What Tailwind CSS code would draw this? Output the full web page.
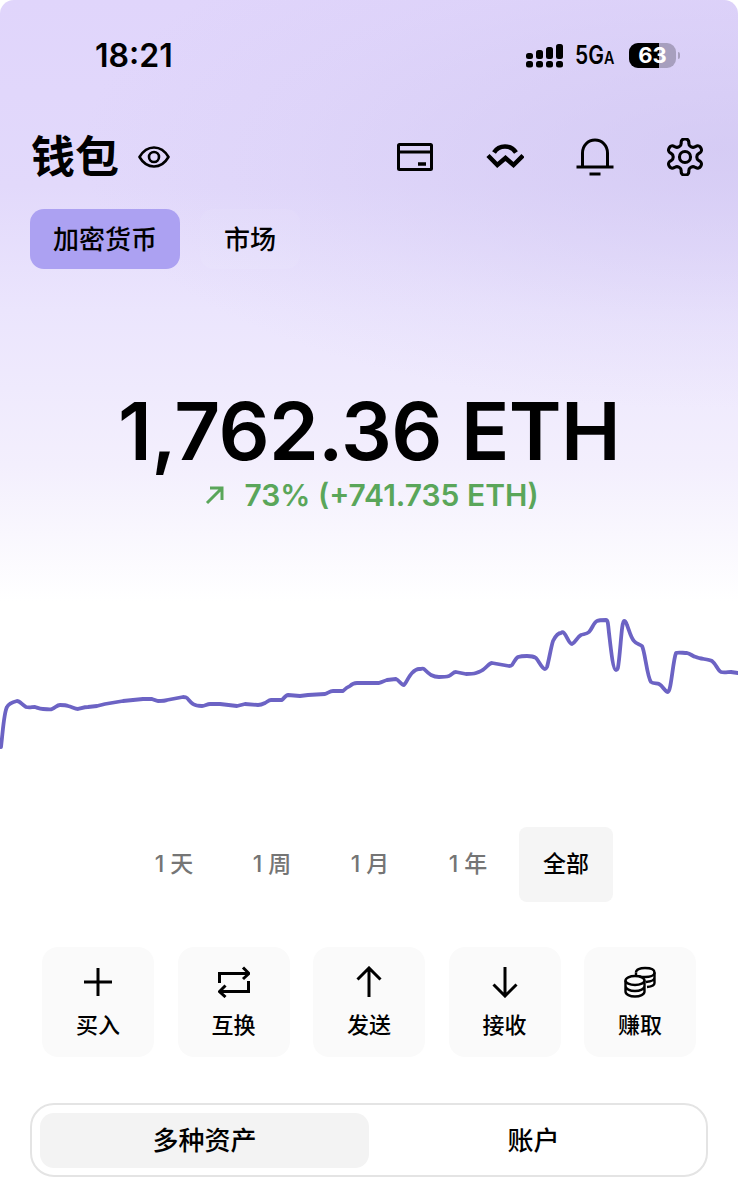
<!doctype html>
<html lang="zh"><head><meta charset="utf-8"><script src="https://cdn.jsdelivr.net/npm/@tailwindcss/browser@4"></script></head>
<body class="bg-white">
<div class="w-[738px] h-[1200px] overflow-hidden bg-white text-black font-['Inter','Noto_Sans_CJK_SC',sans-serif]">
<div class="h-[620px] rounded-t-[14px] bg-[radial-gradient(ellipse_640px_260px_at_720px_150px,#cfc5f1a6,#cfc5f166_35%,#cfc5f126_68%,#cfc5f100),linear-gradient(180deg,#e0d5fb_0%,#e2d9fb_30%,#ebe5fd_50%,#f3effd_75%,#ffffff_97%)]">
  <!-- status bar -->
  <div class="h-[110px] flex items-center justify-between pl-[95px] pr-[58px]">
    <span class="text-[32px] leading-none font-semibold relative top-[1px]">18:21</span>
    <div class="flex items-center">
      <svg width="37" height="25" viewBox="0 0 37 25" fill="#000"><rect x="0" y="10" width="7" height="6" rx="2.500"/><rect x="0" y="18" width="7" height="6.500" rx="2.500"/><rect x="10" y="7" width="7" height="9" rx="2.500"/><rect x="10" y="18" width="7" height="6.500" rx="2.500"/><rect x="20" y="4" width="7" height="12" rx="2.500"/><rect x="20" y="18" width="7" height="6.500" rx="2.500"/><rect x="30" y="1" width="7" height="15" rx="2.500"/><rect x="30" y="18" width="7" height="6.500" rx="2.500"/></svg>
      <span class="ml-[12px] w-[43px] text-[25px] leading-none font-semibold whitespace-nowrap origin-left scale-x-[0.84]">5G<span class="text-[17px]">A</span></span>
      <div class="ml-[11px] relative w-[47px] h-[25px] rounded-[9px] overflow-hidden bg-[#a79fbe] flex items-center justify-center">
        <div class="absolute inset-y-0 left-0 w-[30px] bg-black"></div>
        <span class="relative text-white text-[22px] leading-none font-bold">63</span>
      </div>
      <div class="ml-[2px] w-[2px] h-[7px] rounded-r-full bg-[#a79fbe]"></div>
    </div>
  </div>
  <!-- header -->
  <div class="h-[76px] mt-[9px] flex items-center justify-between pl-[31px] pr-[34px]">
    <div class="flex items-center">
      <h1 class="text-[44px] leading-none font-bold">钱包</h1>
      <svg class="ml-[19px]" width="32" height="22" viewBox="0 0 32 22" fill="none" stroke="#000" stroke-width="2.600"><path d="M1.500 11C5 5 10 1.500 16 1.500S27 5 30.500 11C27 17 22 20.500 16 20.500S5 17 1.500 11Z" stroke-linejoin="round"/><circle cx="16" cy="11" r="5"/></svg>
    </div>
    <div class="flex items-center gap-[52px]">
      <svg width="38" height="38" viewBox="0 0 38 38" fill="none" stroke="#000" stroke-width="3"><rect x="2.500" y="6.500" width="33" height="25" rx="1"/><path d="M2.500 14H35.500"/><path d="M22 26H30" stroke-width="3.500"/></svg>
      <svg width="38" height="38" viewBox="0 0 38 38" fill="none" stroke="#000" stroke-width="4.500"><path d="M8 14.500C13 6.500 25 6.500 30 14.500"/><path d="M2 17.500L11.300 27L19.500 20L27.500 27L37 17.500" stroke-linejoin="miter"/></svg>
      <svg width="38" height="38" viewBox="0 0 38 38" fill="none" stroke="#000" stroke-width="3"><path d="M6.500 28V15C6.500 7.500 12 2 19 2S31.500 7.500 31.500 15V28"/><path d="M0.500 29H37.500"/><path d="M13.500 36H24.500"/></svg>
      <svg width="38" height="38" viewBox="1 1 22 22" fill="none" stroke="#000" stroke-width="1.800" stroke-linejoin="round"><path d="M12.220 1.500h-.44a2 2 0 0 0-2 2v.68a2 2 0 0 1-1 1.730l-.43.25a2 2 0 0 1-2 0l-.65-.33a2 2 0 0 0-2.730.730l-.22.380a2 2 0 0 0 .73 2.730l.65.350a2 2 0 0 1 1 1.720v.510a2 2 0 0 1-1 1.740l-.65.340a2 2 0 0 0-.73 2.730l.22.380a2 2 0 0 0 2.730.730l.65-.33a2 2 0 0 1 2 0l.43.250a2 2 0 0 1 1 1.730v.680a2 2 0 0 0 2 2h.44a2 2 0 0 0 2-2v-.680a2 2 0 0 1 1-1.730l.43-.250a2 2 0 0 1 2 0l.65.330a2 2 0 0 0 2.730-.730l.22-.390a2 2 0 0 0-.73-2.730l-.65-.330a2 2 0 0 1-1-1.740v-.500a2 2 0 0 1 1-1.740l.65-.340a2 2 0 0 0 .73-2.730l-.22-.380a2 2 0 0 0-2.730-.730l-.65.330a2 2 0 0 1-2 0l-.43-.250a2 2 0 0 1-1-1.730v-.680a2 2 0 0 0-2-2z"/><circle cx="12" cy="12" r="3.200"/></svg>
    </div>
  </div>
  <!-- tabs -->
  <div class="mt-[14px] pl-[30px] flex items-center gap-[20px]">
    <div class="w-[150px] h-[60px] rounded-[14px] bg-[#aca1f2] flex items-center justify-center text-[26px] font-medium">加密货币</div>
    <div class="w-[100px] h-[60px] rounded-[14px] bg-white/5 flex items-center justify-center text-[26px] font-medium">市场</div>
  </div>
  <!-- balance -->
  <div class="mt-[118px] text-center text-[80px] leading-[88px] font-semibold whitespace-nowrap tracking-[-0.7px]">1,762.36 ETH</div>
  <div class="mt-[2px] flex items-center justify-center text-[#5aa65a] text-[30px] leading-[36px] font-semibold whitespace-nowrap pl-[6px]">
    <svg class="mr-[19px]" width="20" height="20" viewBox="0 0 20 20" fill="none" stroke="#5aa65a" stroke-width="3"><path d="M2 18L17 3M5 3H17V15"/></svg>
    <span>73% (+741.735 ETH)</span>
  </div>
</div>
<!-- chart -->
<svg class="block overflow-visible" width="738" height="190" viewBox="0 620 738 190" fill="none"><path stroke="#6c63c4" stroke-width="3.800" stroke-linejoin="round" stroke-linecap="round" d="M1 747C3 730 4 712 7 707C9 703 13 702 17 701C20 701 22 705 26 707C29 708 32 707 35 707C38 708 40 709 43 709C47 709 50 710 52 709C55 708 57 705 60 705C64 705 66 705 68 706C72 707 75 709 78 709C82 708 85 707 88 707L97 706L105 704L123 701L143 699L152 699C155 700 156 701 158 701C162 701 165 701 167 700L183 697C185 697 186 697 187 698C189 700 191 703 193 704C196 706 199 706 202 706C205 706 207 704 210 704L220 704L237 706L245 704L258 705C261 705 263 704 265 703C267 702 269 700 271 700L282 700C284 698 286 695 288 695L300 696L308 695L325 694C328 693 330 691 333 691L343 691C345 689 347 687 350 686C352 684 354 683 357 683L369 683L379 683C382 682 384 681 387 680L396 679C399 680 401 685 404 685C406 683 409 676 412 673C414 671 416 669 419 669C421 669 423 668 424 669C426 671 428 673 431 675C433 676 436 677 439 677C443 677 446 677 449 676C452 675 453 672 456 672L466 674C469 674 473 674 476 673C479 672 482 671 484 669C487 667 489 663 492 663L509 666C510 666 511 666 512 665C514 662 516 658 518 657C521 656 524 656 527 656C530 656 533 656 536 658C539 661 542 669 545 669C546 669 546 669 547 667C549 660 551 647 553 641C555 637 558 633 561 633C562 632 563 632 564 633C567 636 569 644 572 644C575 643 577 637 581 635C584 634 587 634 589 632C592 629 594 622 597 621C599 620 603 620 606 620C608 620 608 624 609 633C611 650 613 670 616 670C618 670 618 668 619 660C621 642 622 621 624 621C625 621 626 622 627 625C629 630 631 638 634 641C636 644 640 644 642 646C645 651 647 677 651 682C653 684 657 683 659 684C663 686 665 692 668 692C671 692 673 660 676 653C678 652 683 653 687 653C691 654 692 656 696 657C700 659 708 659 712 661C716 664 718 671 721 672C724 673 728 672 731 672L738 673"/></svg>
<!-- ranges -->
<div class="mt-[17px] flex justify-center gap-[4px] pl-[2px]">
  <div class="w-[94px] h-[75px] flex items-center justify-center text-[23px] font-medium text-[#757575]">1 天</div>
  <div class="w-[94px] h-[75px] flex items-center justify-center text-[23px] font-medium text-[#757575]">1 周</div>
  <div class="w-[94px] h-[75px] flex items-center justify-center text-[23px] font-medium text-[#757575]">1 月</div>
  <div class="w-[94px] h-[75px] flex items-center justify-center text-[23px] font-medium text-[#757575]">1 年</div>
  <div class="w-[94px] h-[75px] flex items-center justify-center text-[23px] font-medium rounded-[8px] bg-[#f5f5f5]">全部</div>
</div>
<!-- actions -->
<div class="mt-[45px] px-[42px] flex justify-between">
  <div class="w-[112px] h-[110px] rounded-[16px] bg-[#fafafa] flex flex-col items-center pt-[19px]">
    <svg width="32" height="32" viewBox="0 0 32 32" fill="none" stroke="#000" stroke-width="3"><path d="M16 2V30M2 16H30"/></svg>
    <span class="mt-[12px] text-[22px] leading-[30px] font-medium">买入</span>
  </div>
  <div class="w-[112px] h-[110px] rounded-[16px] bg-[#fafafa] flex flex-col items-center pt-[19px]">
    <svg width="32" height="32" viewBox="0 0 32 32" fill="none" stroke="#000" stroke-width="3"><path d="M1.500 17V7.500H30M25 1.500L31 7.500L25 13"/><path d="M30.500 15V25.500H2M7.500 19.500L1.500 25.500L7.500 31"/></svg>
    <span class="mt-[12px] text-[22px] leading-[30px] font-medium">互换</span>
  </div>
  <div class="w-[112px] h-[110px] rounded-[16px] bg-[#fafafa] flex flex-col items-center pt-[19px]">
    <svg width="32" height="32" viewBox="0 0 32 32" fill="none" stroke="#000" stroke-width="3"><path d="M16 31V2M4.500 13.500L16 2L27.500 13.500"/></svg>
    <span class="mt-[12px] text-[22px] leading-[30px] font-medium">发送</span>
  </div>
  <div class="w-[112px] h-[110px] rounded-[16px] bg-[#fafafa] flex flex-col items-center pt-[19px]">
    <svg width="32" height="32" viewBox="0 0 32 32" fill="none" stroke="#000" stroke-width="3"><path d="M16 1V30M4.500 18.500L16 30L27.500 18.500"/></svg>
    <span class="mt-[12px] text-[22px] leading-[30px] font-medium">接收</span>
  </div>
  <div class="w-[112px] h-[110px] rounded-[16px] bg-[#fafafa] flex flex-col items-center pt-[19px]">
    <svg width="32" height="32" viewBox="0 0 32 32" fill="none" stroke="#000" stroke-width="2.400"><path d="M12 6.500C12 3.500 16 2 21 2S30.500 3.500 30.500 6.500S26 11 21 11C19 11 17 10.800 15 10"/><path d="M12 6.500V9M30.500 6.500V17C30.500 19 28 20.500 23 21M30.500 11.500C30.500 14 28 15.500 22 16"/><ellipse cx="11" cy="14.500" rx="9.500" ry="4.500"/><path d="M1.500 14.500V25.500C1.500 28.500 6 30.500 11 30.500S20.500 28.500 20.500 25.500V14.500M1.500 20C1.500 23 6 25 11 25S20.500 23 20.500 20"/></svg>
    <span class="mt-[12px] text-[22px] leading-[30px] font-medium">赚取</span>
  </div>
</div>
<!-- segmented -->
<div class="mt-[46px] mx-[30px] h-[74px] rounded-[24px] border-2 border-[#e4e4e4] flex items-center pl-[8px] pr-[8px]">
  <div class="w-[329px] h-[55px] rounded-[14px] bg-[#f3f3f3] flex items-center justify-center text-[26px] font-medium">多种资产</div>
  <div class="flex-1 h-[55px] flex items-center justify-center text-[26px] font-medium">账户</div>
</div>
</div>
</body></html>
